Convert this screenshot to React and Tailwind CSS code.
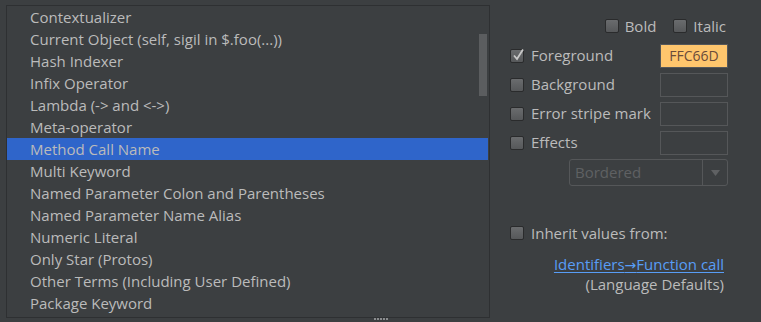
import React from 'react';

const items = [
  'Contextualizer',
  'Current Object (self, sigil in $.foo(...))',
  'Hash Indexer',
  'Infix Operator',
  'Lambda (-> and <->)',
  'Meta-operator',
  'Method Call Name',
  'Multi Keyword',
  'Named Parameter Colon and Parentheses',
  'Named Parameter Name Alias',
  'Numeric Literal',
  'Only Star (Protos)',
  'Other Terms (Including User Defined)',
  'Package Keyword',
];

function Check({ checked }) {
  return (
    <span className="relative w-[14px] h-[14px] shrink-0 rounded-[2px] border border-[#2a2b2c] bg-gradient-to-b from-[#6a6c6e] to-[#56585a]">
      {checked && (
        <svg className="absolute left-[1px] top-[-2px]" width="13" height="14" viewBox="0 0 13 14">
          <path d="M2 7.5 L5 11 L11 1.5" fill="none" stroke="#c8c8c8" strokeWidth="1.8" />
        </svg>
      )}
    </span>
  );
}

function Swatch({ color, label }) {
  return (
    <div
      className={`w-[68px] h-[24px] flex items-center justify-center border text-[14px] ${
        color ? 'bg-[#ffc66d] border-[#555759] text-[#6a4b3a]' : 'border-[#555759]'
      }`}
    >
      {label}
    </div>
  );
}

function AttrRow({ label, checked, color, value }) {
  return (
    <div className="flex items-center h-[23px] mb-[6px]">
      <Check checked={checked} />
      <span className="ml-[7px] flex-1">{label}</span>
      <Swatch color={color} label={value} />
    </div>
  );
}

export default function App() {
  return (
    <div
      className="w-[761px] h-[322px] bg-[#3c3f41] text-[#bbbbbb] text-[15px] flex overflow-hidden relative"
      style={{ fontFamily: '"Open Sans", "Noto Sans", sans-serif' }}
    >
      <div className="relative ml-[6px] mt-[5px] w-[484px] h-[313px] border border-[#2e3032] overflow-hidden">
        <ul>
          {items.map((item, i) => (
            <li
              key={item}
              className={`h-[22px] leading-[22px] pl-[23px] whitespace-nowrap ${
                i === 6 ? 'bg-[#2f65ca] mr-[1px]' : ''
              }`}
            >
              {item}
            </li>
          ))}
        </ul>
        <div className="absolute left-[472px] top-[28px] w-[8px] h-[62px] bg-[#5b5d5f]" />
      </div>

      <div className="w-[218px] ml-[20px] flex flex-col">
        <div className="flex justify-end items-center gap-[6px] mt-[19px] h-[14px] pr-[2px]">
          <Check />
          <span className="mr-[11px]">Bold</span>
          <Check />
          <span>Italic</span>
        </div>
        <div className="mt-[11px]">
          <AttrRow label="Foreground" checked color value="FFC66D" />
          <AttrRow label="Background" />
          <AttrRow label="Error stripe mark" />
          <AttrRow label="Effects" />
        </div>
        <div className="ml-[59px] mt-[-1px] w-[159px] h-[27px] rounded-[3px] border border-[#555759] flex items-center">
          <span className="flex-1 pl-[5px] text-[#5f6163]">Bordered</span>
          <span className="w-[25px] h-full border-l border-[#555759] flex items-center justify-center">
            <svg width="9" height="6" viewBox="0 0 9 6">
              <path d="M0 0 H9 L4.5 6 Z" fill="#5f6163" />
            </svg>
          </span>
        </div>
        <div className="flex items-center mt-[40px] h-[14px]">
          <Check />
          <span className="ml-[7px]">Inherit values from:</span>
        </div>
        <div className="flex flex-col items-end pr-[4px] mt-[15px] leading-[19px]">
          <span className="text-[#589df6] underline underline-offset-2">
            Identifiers<span style={{ fontFamily: '"DejaVu Sans", sans-serif' }} className="text-[14px]">→</span>Function call
          </span>
          <span>(Language Defaults)</span>
        </div>
      </div>

      <div className="absolute left-[374px] top-[318px] flex gap-[1px]">
        {[0, 1, 2, 3, 4].map((d) => (
          <span key={d} className="w-[2px] h-[2px] bg-[#8a8c8e]" />
        ))}
      </div>
    </div>
  );
}
